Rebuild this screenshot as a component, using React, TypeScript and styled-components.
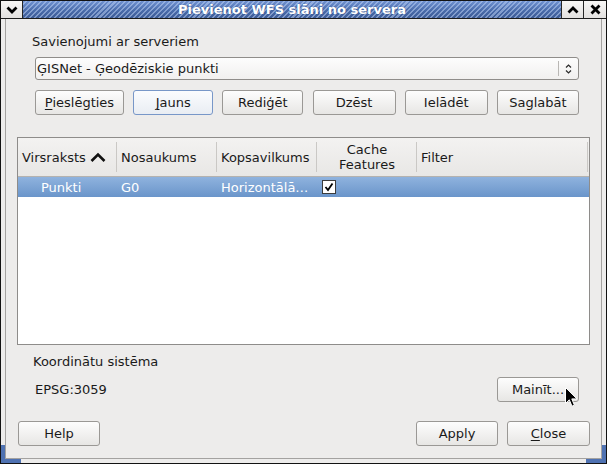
import React from "react"
import styled, { createGlobalStyle } from "styled-components"

const GlobalStyle = createGlobalStyle`
    html, body {
        margin: 0;
        padding: 0;
        background: #edeceb;
    }
`

/*--------------------------------- window frame ---------------------------------*/

const Window = styled.div`
    position: relative;
    width: 607px;
    height: 464px;
    box-sizing: border-box;
    border: 1px solid #121212;
    background: #edeceb;
    display: flex;
    flex-direction: column;
    font-family: "DejaVu Sans", "Liberation Sans", sans-serif;
    font-size: 13px;
    color: #1a1a1a;
    overflow: hidden;
`

const TitleBar = styled.div`
    display: flex;
    height: 18px;
    box-sizing: border-box;
    border-bottom: 1px solid #1c1c1c;
`

const TitleButton = styled.div<{ $side: "left" | "right"; $width?: number }>`
    width: ${({ $width }) => $width ?? 22}px;
    box-sizing: border-box;
    display: flex;
    align-items: center;
    justify-content: center;
    background: linear-gradient(#f8f7f6, #e2e0de);
    ${({ $side }) =>
        $side === "left"
            ? "border-right: 1px solid #262626;"
            : "border-left: 1px solid #262626;"}
`

const TitleStrip = styled.div`
    flex: 1;
    display: flex;
    align-items: center;
    justify-content: center;
    background:
        repeating-linear-gradient(
            135deg,
            rgba(255, 255, 255, 0) 0px,
            rgba(255, 255, 255, 0) 2px,
            rgba(190, 210, 245, 0.5) 2px,
            rgba(190, 210, 245, 0.5) 3.5px
        ),
        linear-gradient(#7193d2, #4a6cab 55%, #3d5c98);
    color: #ffffff;
    font-weight: bold;
    font-size: 13px;
    text-shadow: 0 0 1px rgba(20, 40, 90, 0.6);
`

const Frame = styled.div`
    position: relative;
    flex: 1;
    display: flex;
    padding: 0 4px 4px 4px;
`

const Grip = styled.div<{ $side: "left" | "right" }>`
    position: absolute;
    bottom: 0;
    ${({ $side }) => ($side === "left" ? "left: 0;" : "right: 0;")}
    width: 20px;
    height: 18px;
    border-bottom: 4px solid #4f72b2;
    ${({ $side }) =>
        $side === "left"
            ? "border-left: 4px solid #4f72b2;"
            : "border-right: 4px solid #4f72b2;"}
    box-sizing: border-box;
`

const Client = styled.div`
    position: relative;
    z-index: 1;
    flex: 1;
    display: flex;
    flex-direction: column;
    border: 1px solid #a4a2a0;
    border-top: none;
    background: #edeceb;
    padding: 15px 11px 12px 11px;
`

/*--------------------------------- controls ---------------------------------*/

const Group = styled.div<{ $top?: number }>`
    margin-top: ${({ $top }) => $top ?? 0}px;
    display: flex;
    flex-direction: column;
    padding: 0 11px 0 18px;
`

const Label = styled.div<{ $shift?: number }>`
    line-height: 16px;
    height: 16px;
    margin-left: ${({ $shift }) => $shift ?? 0}px;
    white-space: nowrap;
`

const Combo = styled.div`
    margin-top: 7px;
    height: 23px;
    box-sizing: border-box;
    display: flex;
    align-items: center;
    border: 1px solid #8f8d8a;
    border-radius: 3px;
    background: linear-gradient(#fdfdfd, #f1f0ef);
`

const ComboText = styled.div`
    flex: 1;
    padding-left: 1px;
    white-space: nowrap;
`

const ComboSep = styled.div`
    width: 1px;
    height: 15px;
    background: #b9b7b4;
`

const ComboArrow = styled.div`
    width: 19px;
    display: flex;
    align-items: center;
    justify-content: center;
`

const ButtonRow = styled.div<{ $top?: number }>`
    margin-top: ${({ $top }) => $top ?? 0}px;
    display: flex;
    align-items: center;
    justify-content: space-between;
`

const Button = styled.button<{ $width: number; $focused?: boolean }>`
    width: ${({ $width }) => $width}px;
    height: 25px;
    box-sizing: border-box;
    padding: 0;
    margin: 0;
    border: 1px solid ${({ $focused }) => ($focused ? "#7897c8" : "#9a9895")};
    border-radius: 3px;
    background: ${({ $focused }) =>
        $focused
            ? "linear-gradient(#fbfcfe, #e9edf3)"
            : "linear-gradient(#fdfdfd, #e7e6e4)"};
    font-family: inherit;
    font-size: 13px;
    color: #1a1a1a;
    line-height: 23px;
    text-align: center;
    white-space: nowrap;

    u {
        text-decoration-thickness: 1px;
        text-underline-offset: 2px;
    }
`

/*--------------------------------- layer list ---------------------------------*/

const Table = styled.div`
    margin-top: 22px;
    height: 208px;
    box-sizing: border-box;
    border: 1px solid #8e8c8a;
    background: #ffffff;
    display: flex;
    flex-direction: column;
`

const columns = "99px 100px 100px 100px 1fr"

const HeaderRow = styled.div`
    display: grid;
    grid-template-columns: ${columns};
    height: 39px;
    box-sizing: border-box;
    border-bottom: 1px solid #b4b2af;
    background: linear-gradient(#f3f2f1, #e8e7e5);
`

const HeaderCell = styled.div<{ $center?: boolean; $last?: boolean }>`
    display: flex;
    align-items: center;
    justify-content: ${({ $center }) => ($center ? "center" : "flex-start")};
    text-align: ${({ $center }) => ($center ? "center" : "left")};
    padding-left: ${({ $center }) => ($center ? 0 : 4)}px;
    line-height: 15px;
    gap: 4px;
    background: linear-gradient(#cac8c5, #cac8c5) right center / 1px 30px
        no-repeat;
    ${({ $last }) => ($last ? "background-position: right 1px center;" : "")}
`

const DataRow = styled.div<{ $selected?: boolean }>`
    display: grid;
    grid-template-columns: ${columns};
    height: 20px;
    align-items: center;
    color: ${({ $selected }) => ($selected ? "#ffffff" : "#1a1a1a")};
    background: ${({ $selected }) =>
        $selected ? "linear-gradient(#8fb3de, #6a95ca)" : "transparent"};
`

const DataCell = styled.div<{ $indent?: number }>`
    padding-left: ${({ $indent }) => $indent ?? 4}px;
    white-space: nowrap;
    overflow: hidden;
    display: flex;
    align-items: center;
`

const Check = styled.div`
    width: 14px;
    height: 14px;
    box-sizing: border-box;
    border: 1px solid #3c3c3c;
    background: #ffffff;
    display: flex;
    align-items: center;
    justify-content: center;
`

/*--------------------------------- crs + buttons ---------------------------------*/

const CrsRow = styled.div`
    margin-top: 7px;
    display: flex;
    align-items: center;
    justify-content: space-between;
`

const BottomRow = styled.div`
    margin-top: 19px;
    display: flex;
    align-items: center;
    gap: 9px;
    padding-left: 1px;
`

const Spacer = styled.div`
    flex: 1;
`

const Pointer = styled.svg`
    position: absolute;
    left: 564px;
    top: 386px;
    z-index: 5;
`

const Chevron = ({ up }: { up?: boolean }) => (
    <svg width="12" height="8" viewBox="0 0 12 8">
        <polyline
            points={up ? "1.5,6.5 6,2 10.5,6.5" : "1.5,1.5 6,6 10.5,1.5"}
            fill="none"
            stroke="#000"
            strokeWidth="2.8"
        />
    </svg>
)

const CloseX = () => (
    <svg width="11" height="11" viewBox="0 0 11 11">
        <path d="M1.5 1.5 L9.5 9.5 M9.5 1.5 L1.5 9.5" stroke="#000" strokeWidth="2.8" />
    </svg>
)

const App = () => {
    return (
        <>
            <GlobalStyle />
            <Window>
                <TitleBar>
                    <TitleButton $side="left">
                        <Chevron />
                    </TitleButton>
                    <TitleStrip>Pievienot WFS slāni no servera</TitleStrip>
                    <TitleButton $side="right">
                        <Chevron up />
                    </TitleButton>
                    <TitleButton $side="right" $width={23}>
                        <CloseX />
                    </TitleButton>
                </TitleBar>

                <Frame>
                    <Grip $side="left" />
                    <Grip $side="right" />

                    <Client>
                        <Group>
                            <Label $shift={-3}>Savienojumi ar serveriem</Label>
                            <Combo>
                                <ComboText>ĢISNet - Ģeodēziskie punkti</ComboText>
                                <ComboSep />
                                <ComboArrow>
                                    <svg width="7" height="12" viewBox="0 0 7 12">
                                        <path
                                            d="M1 4.5 L3.5 2 L6 4.5 M1 7.5 L3.5 10 L6 7.5"
                                            fill="none"
                                            stroke="#2a2a2a"
                                            strokeWidth="1.2"
                                        />
                                    </svg>
                                </ComboArrow>
                            </Combo>

                            <ButtonRow $top={10}>
                                <Button $width={89}>
                                    <u>P</u>ieslēgties
                                </Button>
                                <Button $width={80} $focused>
                                    <u>J</u>auns
                                </Button>
                                <Button $width={81}>Rediģēt</Button>
                                <Button $width={83}>Dzēst</Button>
                                <Button $width={83}>Ielādēt</Button>
                                <Button $width={82}>Saglabāt</Button>
                            </ButtonRow>
                        </Group>

                        <Table>
                            <HeaderRow>
                                <HeaderCell>
                                    Virsraksts
                                    <svg width="16" height="10" viewBox="0 0 16 10">
                                        <polyline
                                            points="1.5,9 8,2.5 14.5,9"
                                            fill="none"
                                            stroke="#111"
                                            strokeWidth="2.6"
                                        />
                                    </svg>
                                </HeaderCell>
                                <HeaderCell>Nosaukums</HeaderCell>
                                <HeaderCell>Kopsavilkums</HeaderCell>
                                <HeaderCell $center>
                                    Cache
                                    <br />
                                    Features
                                </HeaderCell>
                                <HeaderCell $last>Filter</HeaderCell>
                            </HeaderRow>

                            <DataRow $selected>
                                <DataCell $indent={23}>Punkti</DataCell>
                                <DataCell>G0</DataCell>
                                <DataCell>Horizontālā…</DataCell>
                                <DataCell $indent={5}>
                                    <Check>
                                        <svg width="10" height="10" viewBox="0 0 10 10">
                                            <polyline
                                                points="1.5,5 4,8 8.5,1.5"
                                                fill="none"
                                                stroke="#000"
                                                strokeWidth="1.8"
                                            />
                                        </svg>
                                    </Check>
                                </DataCell>
                                <DataCell />
                            </DataRow>
                        </Table>

                        <Group $top={9}>
                            <Label $shift={-2}>Koordinātu sistēma</Label>
                            <CrsRow>
                                <span>EPSG:3059</span>
                                <Button $width={82}>Mainīt...</Button>
                            </CrsRow>
                        </Group>

                        <BottomRow>
                            <Button $width={82}>Help</Button>
                            <Spacer />
                            <Button $width={82}>Apply</Button>
                            <Button $width={83}>
                                <u>C</u>lose
                            </Button>
                        </BottomRow>
                    </Client>
                </Frame>

                <Pointer width="13" height="21" viewBox="0 0 13 21">
                    <path
                        d="M0.5 0.5 L0.5 16.5 L4.3 12.8 L7 19.2 L9.4 18.2 L6.8 11.9 L12 11.9 Z"
                        fill="#000"
                        stroke="#fff"
                        strokeWidth="1"
                        strokeLinejoin="round"
                    />
                </Pointer>
            </Window>
        </>
    )
}

export default App
